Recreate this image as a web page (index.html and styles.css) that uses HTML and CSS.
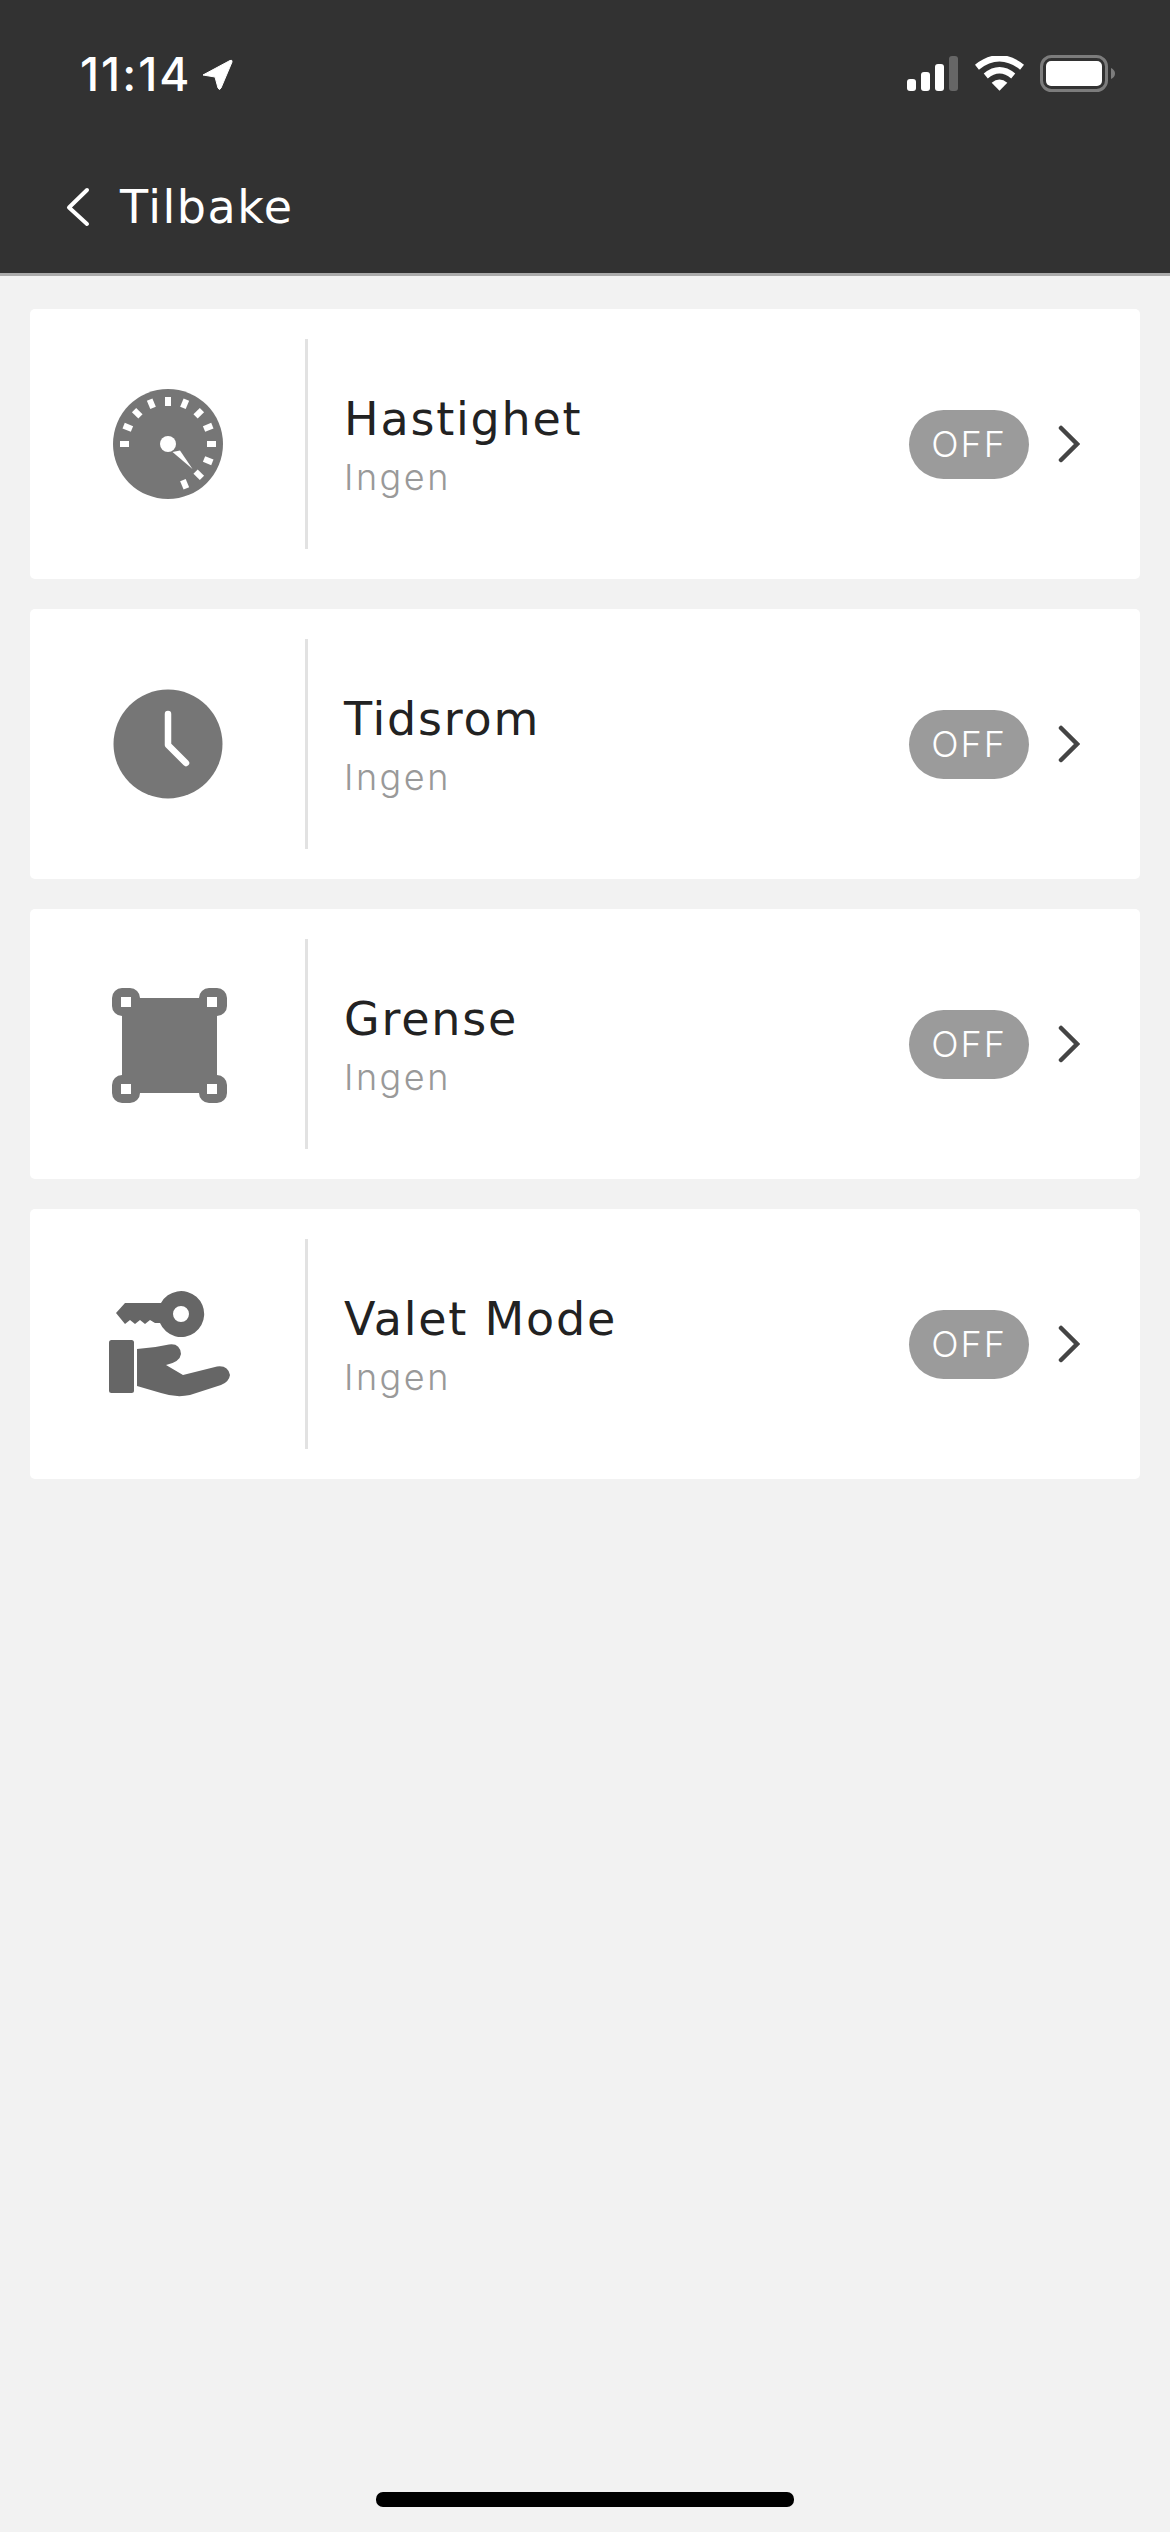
FILE: index.html
```html
<!DOCTYPE html>
<html lang="en">
<head>
    <meta charset="UTF-8">
    <meta name="viewport" content="width=device-width, initial-scale=1.0">
    <title>Tilbake</title>
    <link rel="stylesheet" href="styles.css">
</head>
<body>
    <div class="head_container">
        <div class="status_bar">
            <div class="time">
                <span>11:14</span>
                <svg class="location" width="32" height="32" viewBox="0 0 32 32">
                    <path d="M2 17 L29 2.500 Q31.500 1.500 31 4 L20 30 Q18.500 33 17 30 L14 19 Z" fill="#fff" stroke="#fff" stroke-width="1" stroke-linejoin="round"/>
                </svg>
            </div>
            <div class="status_icons">
                <svg width="52" height="36" viewBox="0 0 52 36">
                    <rect x="0" y="23" width="9" height="12" rx="3" fill="#fff"/>
                    <rect x="14" y="16" width="9" height="19" rx="3" fill="#fff"/>
                    <rect x="28" y="8" width="9" height="27" rx="3" fill="#fff"/>
                    <rect x="42" y="0" width="9" height="35" rx="3" fill="#666"/>
                </svg>
                <svg width="49" height="36" viewBox="0 0 50 36">
                    <path d="M2 11 Q25 -7 48 11" fill="none" stroke="#fff" stroke-width="6.500"/>
                    <path d="M11 20 Q25 8.500 39 20" fill="none" stroke="#fff" stroke-width="6.500"/>
                    <path d="M17 27 Q25 20 33 27 L25 35 Z" fill="#fff"/>
                </svg>
                <svg width="76" height="38" viewBox="0 0 76 38">
                    <rect x="1.500" y="1.500" width="65" height="34" rx="10" fill="none" stroke="#7c7c7c" stroke-width="3"/>
                    <rect x="6" y="6" width="56" height="25" rx="5" fill="#fff"/>
                    <path d="M71 13 Q75 15 75 18.500 Q75 22 71 24 Z" fill="#7c7c7c"/>
                </svg>
            </div>
        </div>
        <div class="nav_bar">
            <svg class="back" width="24" height="40" viewBox="0 0 24 40">
                <path d="M21 3 L3 20.500 L21 37" fill="none" stroke="#fff" stroke-width="4" stroke-linecap="round" stroke-linejoin="round"/>
            </svg>
            <span>Tilbake</span>
        </div>
    </div>

    <div class="list">
        <div class="card">
            <div class="card_icon">
                <svg width="112" height="112" viewBox="0 0 112 112">
                    <circle cx="56" cy="56" r="55" fill="#767676"/>
                    <g fill="#fff">
                        <rect x="8" y="53" width="9" height="6"/>
                        <rect x="95" y="53" width="9" height="6"/>
                        <rect x="53" y="9" width="6" height="9"/>
                        <rect x="8" y="53" width="9" height="6" transform="rotate(22.500 56 56)"/>
                        <rect x="8" y="53" width="9" height="6" transform="rotate(45 56 56)"/>
                        <rect x="8" y="53" width="9" height="6" transform="rotate(67.500 56 56)"/>
                        <rect x="8" y="53" width="9" height="6" transform="rotate(112.500 56 56)"/>
                        <rect x="8" y="53" width="9" height="6" transform="rotate(135 56 56)"/>
                        <rect x="8" y="53" width="9" height="6" transform="rotate(157.500 56 56)"/>
                        <rect x="8" y="53" width="9" height="6" transform="rotate(202.500 56 56)"/>
                        <rect x="8" y="53" width="9" height="6" transform="rotate(225 56 56)"/>
                        <rect x="8" y="53" width="9" height="6" transform="rotate(247.500 56 56)"/>
                        <circle cx="56" cy="56" r="8"/>
                        <path d="M60.500 64 L68 62.500 L80.500 81 Z"/>
                    </g>
                </svg>
            </div>
            <div class="card_text">
                <div class="card_title">Hastighet</div>
                <div class="card_sub">Ingen</div>
            </div>
            <div class="badge">OFF</div>
            <svg class="chevron" width="22" height="38" viewBox="0 0 22 38">
                <path d="M3 3 L19 19 L3 35" fill="none" stroke="#444" stroke-width="4.500" stroke-linecap="round"/>
            </svg>
        </div>

        <div class="card">
            <div class="card_icon">
                <svg width="112" height="112" viewBox="0 0 112 112">
                    <circle cx="56" cy="56" r="54.500" fill="#767676"/>
                    <path d="M56 26 L56 57 L74 75" fill="none" stroke="#fff" stroke-width="6.500" stroke-linecap="round" stroke-linejoin="round"/>
                </svg>
            </div>
            <div class="card_text">
                <div class="card_title">Tidsrom</div>
                <div class="card_sub">Ingen</div>
            </div>
            <div class="badge">OFF</div>
            <svg class="chevron" width="22" height="38" viewBox="0 0 22 38">
                <path d="M3 3 L19 19 L3 35" fill="none" stroke="#444" stroke-width="4.500" stroke-linecap="round"/>
            </svg>
        </div>

        <div class="card">
            <div class="card_icon card_icon_wide">
                <svg class="grense_icon" width="116" height="116" viewBox="0 0 116 116">
                    <path d="M10 0 H18 A10 10 0 0 1 28 10 H87 A10 10 0 0 1 97 0 H105 A10 10 0 0 1 115 10 V18 A10 10 0 0 1 105 28 V87 A10 10 0 0 1 115 97 V105 A10 10 0 0 1 105 115 H97 A10 10 0 0 1 87 105 H28 A10 10 0 0 1 18 115 H10 A10 10 0 0 1 0 105 V97 A10 10 0 0 1 10 87 V28 A10 10 0 0 1 0 18 V10 A10 10 0 0 1 10 0 Z" fill="#767676"/>
                    <g fill="#fff">
                        <rect x="9" y="9" width="10" height="10"/>
                        <rect x="95" y="9" width="10" height="10"/>
                        <rect x="9" y="96" width="10" height="10"/>
                        <rect x="95" y="96" width="10" height="10"/>
                    </g>
                </svg>
            </div>
            <div class="card_text">
                <div class="card_title">Grense</div>
                <div class="card_sub">Ingen</div>
            </div>
            <div class="badge">OFF</div>
            <svg class="chevron" width="22" height="38" viewBox="0 0 22 38">
                <path d="M3 3 L19 19 L3 35" fill="none" stroke="#444" stroke-width="4.500" stroke-linecap="round"/>
            </svg>
        </div>

        <div class="card">
            <div class="card_icon card_icon_wide">
                <svg width="122" height="108" viewBox="0 0 122 108">
                    <path fill-rule="evenodd" d="M16 13 H52 A23 23 0 1 1 51 33 H46 L41 30 L36 34 L31 30 L26 34 L21 30 L16 34 L7 23 Z M72 16 A8 8 0 1 0 72 32 A8 8 0 1 0 72 16 Z" fill="#666"/>
                    <rect x="0" y="50" width="25" height="53" rx="2.500" fill="#666"/>
                    <path d="M28 59 Q45 58 60 54.500 Q71 53 72 64 Q71 72 57 75 L74 85 L108 76.500 Q119 75 121 85 Q120 92 112 95 L81 105 Q67 108 52 103 L28 96 Z" fill="#666"/>
                </svg>
            </div>
            <div class="card_text">
                <div class="card_title">Valet Mode</div>
                <div class="card_sub">Ingen</div>
            </div>
            <div class="badge">OFF</div>
            <svg class="chevron" width="22" height="38" viewBox="0 0 22 38">
                <path d="M3 3 L19 19 L3 35" fill="none" stroke="#444" stroke-width="4.500" stroke-linecap="round"/>
            </svg>
        </div>
    </div>

    <div class="home_bar"></div>
</body>
</html>
```

FILE: styles.css
```css
* {
    margin: 0;
    padding: 0;
    box-sizing: border-box;
}

body {
    background-color: #f2f2f2;
    font-family: Inter, "Liberation Sans", sans-serif;
    width: 1170px;
    height: 2532px;
    display: flex;
    flex-direction: column;
    overflow: hidden;
}

.head_container {
    height: 276px;
    background-color: #323232;
    border-bottom: 3px solid #ababab;
    color: #fff;
}

.status_bar {
    height: 177px;
    padding: 52px 54px 0 80px;
    display: flex;
    justify-content: space-between;
    align-items: flex-start;
}

.time {
    display: flex;
    align-items: center;
    gap: 10px;
    font-size: 46px;
    font-weight: 500;
    letter-spacing: 2px;
    line-height: 44px;
}

.status_icons {
    display: flex;
    align-items: center;
    gap: 16px;
    padding-top: 3px;
}

.nav_bar {
    display: flex;
    align-items: center;
    gap: 30px;
    padding-left: 66px;
    height: 60px;
    font-family: "DejaVu Sans", sans-serif;
    font-size: 46px;
    letter-spacing: 1.500px;
}

.list {
    padding: 33px 30px 0;
    display: flex;
    flex-direction: column;
    gap: 30px;
}

.card {
    height: 270px;
    background-color: #fff;
    border-radius: 5px;
    padding: 30px 60px 30px 0;
    display: flex;
    align-items: center;
}

.card_icon {
    width: 278px;
    height: 210px;
    border-right: 3px solid #e2e2e2;
    display: flex;
    align-items: center;
    justify-content: center;
}

.card_icon_wide {
    padding-left: 5px;
}

.grense_icon {
    margin-top: 3px;
}

.card_text {
    flex: 1;
    padding: 3px 0 0 36px;
}

.card_title {
    font-family: "DejaVu Sans", sans-serif;
    font-size: 46px;
    line-height: 62px;
    letter-spacing: 1.800px;
    color: #222;
}

.card_sub {
    font-size: 36px;
    font-weight: 300;
    line-height: 54px;
    letter-spacing: 2.500px;
    color: #999;
}

.badge {
    width: 120px;
    height: 69px;
    border-radius: 35px;
    background-color: #9b9b9b;
    color: #fff;
    font-size: 36px;
    font-weight: 300;
    letter-spacing: 2px;
    display: flex;
    align-items: center;
    justify-content: center;
}

.chevron {
    margin-left: 29px;
}

.home_bar {
    width: 418px;
    height: 15px;
    border-radius: 7px;
    background-color: #000;
    margin: auto auto 25px;
}
```
